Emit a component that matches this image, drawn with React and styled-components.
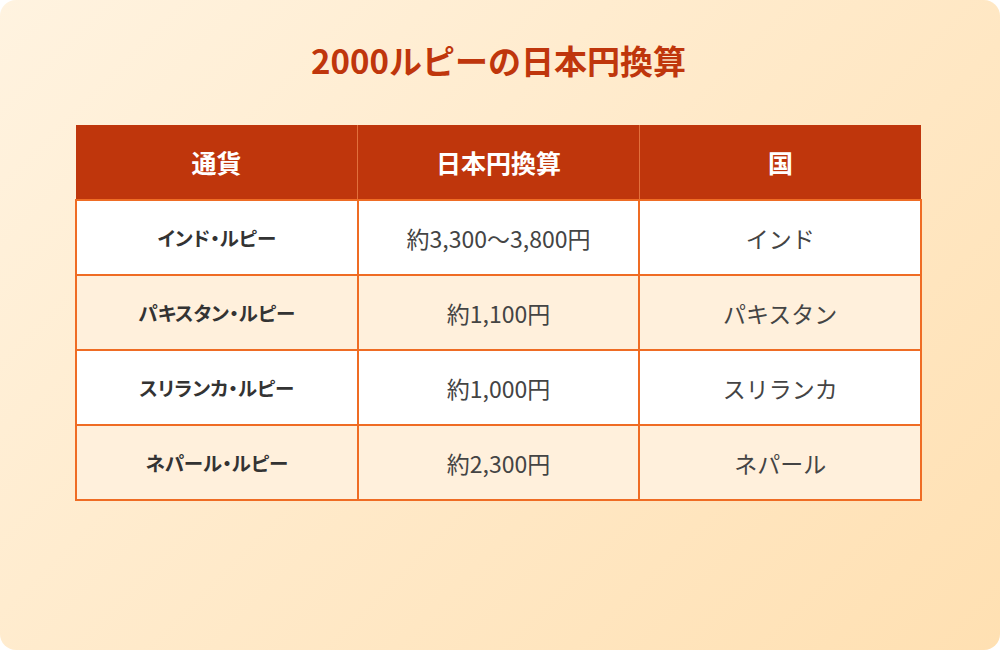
import styled, { createGlobalStyle } from "styled-components";

const GlobalStyle = createGlobalStyle`
  html, body {
    margin: 0;
    padding: 0;
    background: #ffffff;
  }
  body {
    font-family: "Noto Sans CJK JP", "Noto Sans", sans-serif;
  }
`;

const rows = [
  { name: "インド・ルピー", yen: "約3,300〜3,800円", country: "インド" },
  { name: "パキスタン・ルピー", yen: "約1,100円", country: "パキスタン" },
  { name: "スリランカ・ルピー", yen: "約1,000円", country: "スリランカ" },
  { name: "ネパール・ルピー", yen: "約2,300円", country: "ネパール" },
];

export default function App() {
  return (
    <>
      <GlobalStyle />
      <Card>
        <Title>2000ルピーの日本円換算</Title>
        <Table>
          <thead>
            <tr>
              <Th>通貨</Th>
              <Th>日本円換算</Th>
              <Th>国</Th>
            </tr>
          </thead>
          <tbody>
            {rows.map((row, i) => (
              <Row key={row.name} $alt={i % 2 === 1}>
                <NameCell>{row.name}</NameCell>
                <Td>{row.yen}</Td>
                <Td>{row.country}</Td>
              </Row>
            ))}
          </tbody>
        </Table>
      </Card>
    </>
  );
}

const Card = styled.div`
  width: 1000px;
  height: 650px;
  box-sizing: border-box;
  border-radius: 16px;
  background: linear-gradient(135deg, #fff3e0 0%, #ffe0b2 100%);
  padding: 33px 78px 0 75px;
  display: flex;
  flex-direction: column;
  align-items: stretch;
`;

const Title = styled.h1`
  margin: 0 0 38px 0;
  height: 54px;
  line-height: 54px;
  text-align: center;
  font-size: 33px;
  font-weight: 700;
  color: #bf360c;
`;

const Table = styled.table`
  width: 847px;
  border-collapse: collapse;
  table-layout: fixed;
`;

const Th = styled.th`
  height: 75px;
  padding: 0;
  box-sizing: border-box;
  background: #bf360c;
  color: #ffffff;
  font-size: 25px;
  font-weight: 700;
  text-align: center;
  border-left: 1px solid #e2703c;
  &:first-child {
    border-left: none;
  }
`;

const Row = styled.tr`
  background: ${(p) => (p.$alt ? "#fff0dc" : "#ffffff")};
`;

const Td = styled.td`
  height: 75px;
  padding: 0;
  box-sizing: border-box;
  border: 2px solid #ef6c24;
  text-align: center;
  font-size: 23px;
  font-weight: 400;
  color: #444444;
`;

const NameCell = styled(Td)`
  font-size: 19.5px;
  font-weight: 700;
  font-feature-settings: "palt";
  color: #333333;
`;
